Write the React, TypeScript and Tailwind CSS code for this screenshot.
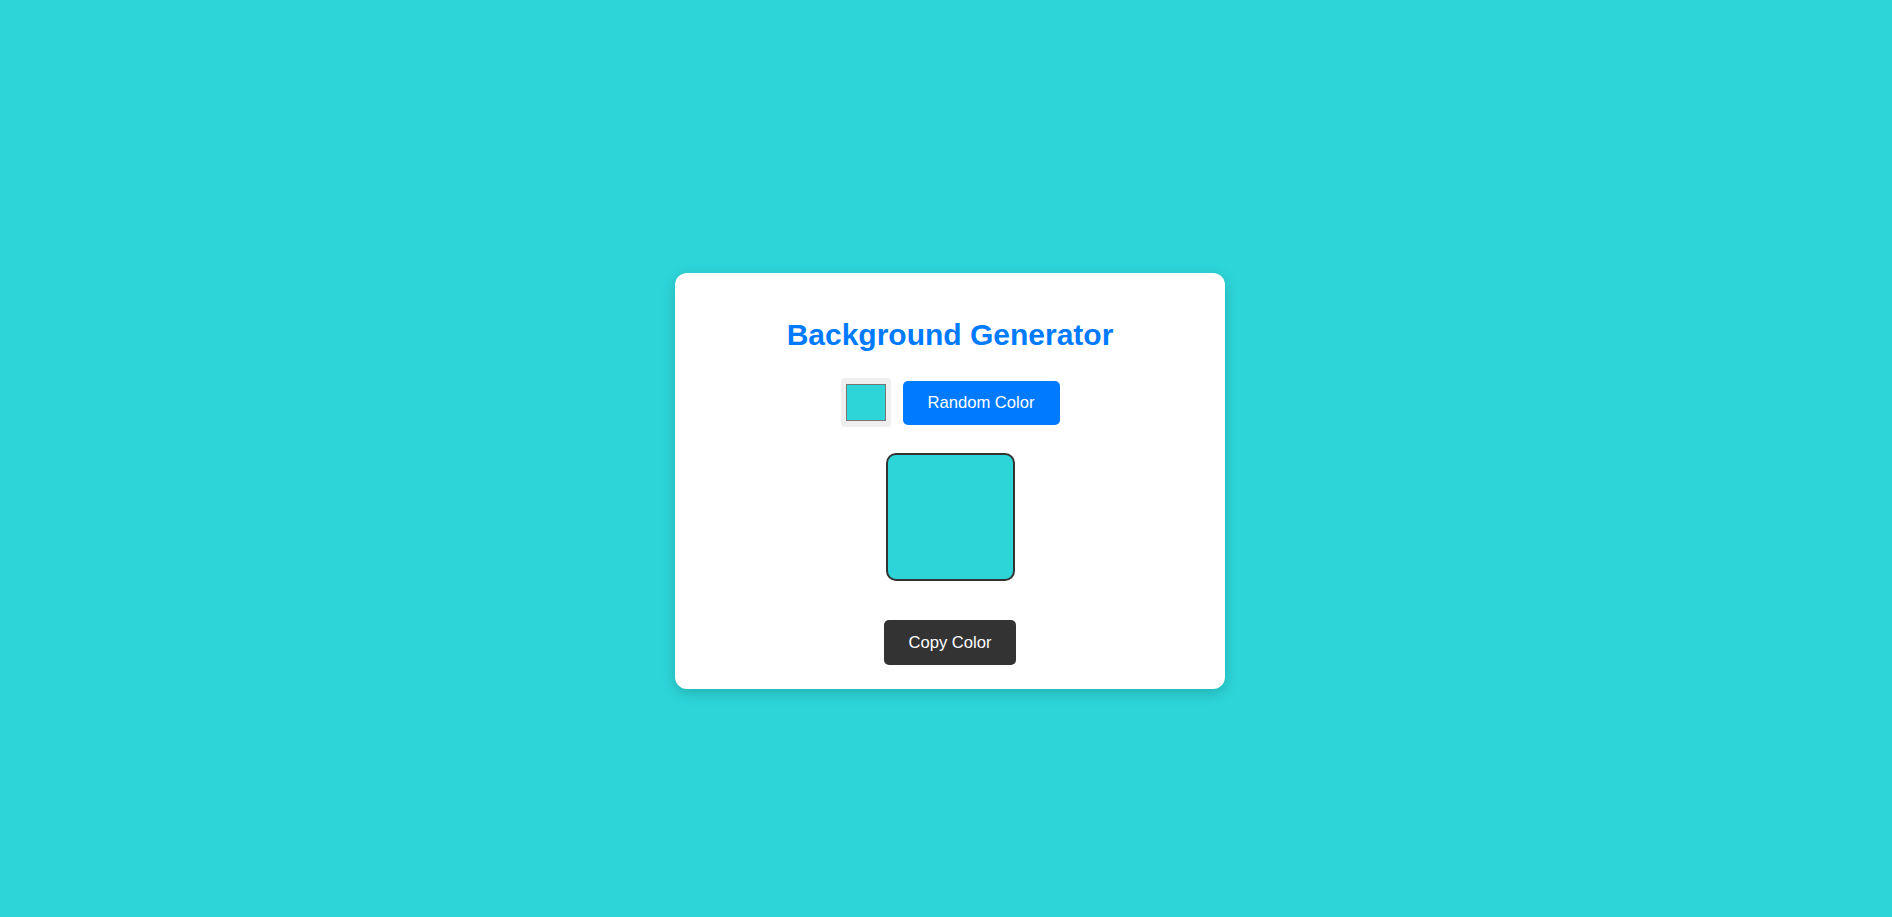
import React from "react";

export default function App() {
  const color = "#2dd5d8";
  return (
    <div
      className="h-screen w-full flex justify-center items-start pt-[273px] pl-[8px] bg-[#2dd5d8]"
      style={{ fontFamily: '"Liberation Sans", Arial, sans-serif' }}
    >
      <div className="w-[550px] bg-white rounded-[12px] shadow-[0_4px_14px_rgba(0,0,0,0.18)] flex flex-col items-center pt-[45px] pb-[24px]">
        <h1 className="text-[30px] leading-[34px] font-bold text-[#007bff] m-0">
          Background Generator
        </h1>
        <div className="mt-[26px] h-[49px] flex items-center gap-[12px]">
          <div className="w-[50px] h-[49px] rounded-[4px] bg-[#efefef] flex items-center justify-center">
            <div className="w-[40px] h-[37px] border border-[#767676] bg-[#2dd5d8]" />
          </div>
          <button className="w-[157px] h-[44px] rounded-[5px] bg-[#007bff] text-white text-[16.6px] leading-[18px] flex items-center justify-center">
            Random Color
          </button>
        </div>
        <div
          className="mt-[26px] w-[129px] h-[128px] border-2 border-[#333333] rounded-[10px] bg-[#2dd5d8]"
          title={color}
        />
        <button className="mt-[39px] w-[132px] h-[45px] rounded-[5px] bg-[#333333] text-white text-[16.6px] leading-[18px] flex items-center justify-center">
          Copy Color
        </button>
      </div>
    </div>
  );
}
